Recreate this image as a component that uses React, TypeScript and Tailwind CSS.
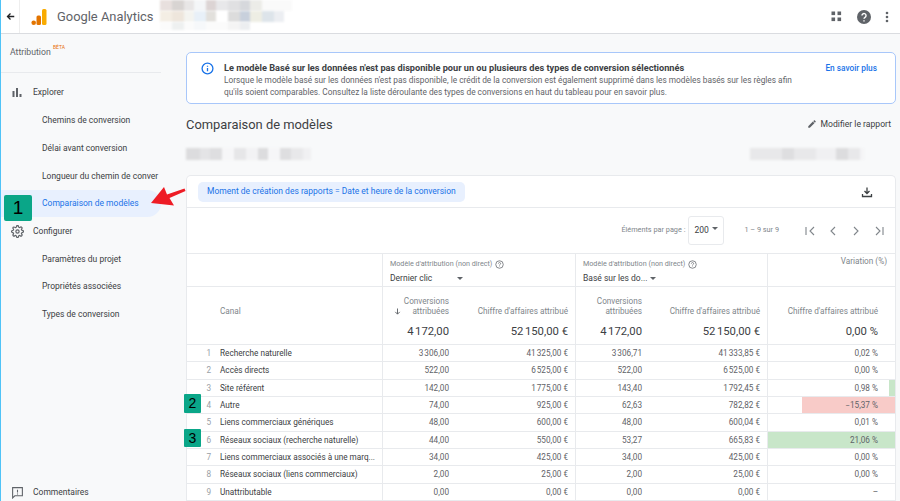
import React from "react";

const F = "font-['Roboto',sans-serif]";

const rows = [
  ["1", "Recherche naturelle", "3\u202f306,00", "41\u202f325,00 €", "3\u202f306,71", "41\u202f333,85 €", "0,02 %"],
  ["2", "Accès directs", "522,00", "6\u202f525,00 €", "522,00", "6\u202f525,00 €", "0,00 %"],
  ["3", "Site référent", "142,00", "1\u202f775,00 €", "143,40", "1\u202f792,45 €", "0,98 %"],
  ["4", "Autre", "74,00", "925,00 €", "62,63", "782,82 €", "−15,37 %"],
  ["5", "Liens commerciaux génériques", "48,00", "600,00 €", "48,00", "600,04 €", "0,01 %"],
  ["6", "Réseaux sociaux (recherche naturelle)", "44,00", "550,00 €", "53,27", "665,83 €", "21,06 %"],
  ["7", "Liens commerciaux associés à une marq...", "34,00", "425,00 €", "34,00", "425,00 €", "0,00 %"],
  ["8", "Réseaux sociaux (liens commerciaux)", "2,00", "25,00 €", "2,00", "25,00 €", "0,00 %"],
  ["9", "Unattributable", "0,00", "0,00 €", "0,00", "0,00 €", "–"],
];

function Blur({ cells, h }: { cells: [number, string][]; h: number }) {
  return (
    <div className="flex blur-[1px]" style={{ height: h }}>
      {cells.map(([w, c], i) => (
        <div key={i} style={{ width: w, backgroundColor: c }} />
      ))}
    </div>
  );
}

function NavItem({ label, active }: { label: string; active?: boolean }) {
  return (
    <div
      className={`h-[27.7px] flex items-center pl-[41px] text-[8.5px] whitespace-nowrap overflow-hidden w-[160px] rounded-r-full ${
        active ? "bg-[#e8f0fe] text-[#1a73e8]" : "text-[#3c4043]"
      }`}
    >
      {label}
    </div>
  );
}

function ModelHead({ value }: { value: string }) {
  return (
    <div className="pl-[7px] pt-[3px] border-b border-[#e8eaed] h-[33px]">
      <div className="flex items-center gap-[3px] text-[7.2px] text-[#80868b] h-[14px] whitespace-nowrap">
        Modèle d'attribution (non direct)
        <svg width="9" height="9" viewBox="0 0 24 24" fill="none" stroke="#5f6368" strokeWidth="2">
          <circle cx="12" cy="12" r="10" />
          <path d="M9 9.5a3 3 0 1 1 4.5 2.6c-1 .6-1.5 1.2-1.5 2.4M12 17v1" />
        </svg>
      </div>
      <div className="flex items-center text-[8.5px] text-[#3c4043] mt-[1px] whitespace-nowrap">
        <span className="w-[67px]">{value}</span>
        <span className="w-0 h-0 border-x-[3px] border-x-transparent border-t-[3px] border-t-[#5f6368]" />
      </div>
    </div>
  );
}

function MetricHead({ sorted }: { sorted?: boolean }) {
  return (
    <div className="grid grid-cols-[66px_1fr] h-[57px] pr-[7px]">
      <div className="flex flex-col items-end pt-[9px] relative">
        <div className="text-[8.2px] leading-[10px] text-[#80868b] text-right whitespace-nowrap">
          Conversions
          <br />
          attribuées
        </div>
        {sorted && (
          <svg className="absolute left-[10px] top-[20px]" width="9" height="9" viewBox="0 0 24 24" fill="none" stroke="#5f6368" strokeWidth="2.5">
            <path d="M12 4v15M6 13l6 6 6-6" />
          </svg>
        )}
        <div className="text-[11.3px] text-[#3c4043] mt-[8px] leading-[15px] whitespace-nowrap">4{"\u202f"}172,00</div>
      </div>
      <div className="flex flex-col items-end pt-[19px]">
        <div className="text-[8.2px] leading-[10px] text-[#80868b] whitespace-nowrap">Chiffre d'affaires attribué</div>
        <div className="text-[11.3px] text-[#3c4043] mt-[8px] leading-[15px] whitespace-nowrap">52{"\u202f"}150,00 €</div>
      </div>
    </div>
  );
}

export default function App() {
  return (
    <div className={`${F} w-[900px] h-[501px] overflow-hidden bg-[#f8f9fa] relative border-l border-[#4fc3f7] flex flex-col`}>
      {/* top bar */}
      <header className="h-[34px] shrink-0 bg-white border-b border-[#dadce0] flex items-center">
        <div className="w-[19px] h-full flex items-center justify-center border-r border-[#eeeeee]">
          <svg width="9" height="9" viewBox="0 0 24 24" fill="none" stroke="#202124" strokeWidth="3.5">
            <path d="M22 12H4M12 4l-8 8 8 8" />
          </svg>
        </div>
        <svg className="ml-[11px]" width="16" height="18" viewBox="0 0 16 18">
          <rect x="11" y="1" width="4.5" height="16" rx="1.5" fill="#f9ab00" />
          <rect x="5.5" y="7.5" width="4.5" height="9.5" rx="1.5" fill="#e37400" />
          <circle cx="2.7" cy="14.7" r="2.3" fill="#e37400" />
        </svg>
        <span className="ml-[10px] text-[12.9px] text-[#5f6368] whitespace-nowrap w-[103px]">Google Analytics</span>
        <div className="flex flex-col self-start">
          <Blur h={11} cells={[[12, "#e8e0de"], [12, "#d8d4d2"], [10, "#e8e6e6"], [12, "#f4f6f8"], [10, "#dcd4d4"], [12, "#e8e8ea"], [12, "#e0e0e2"], [10, "#d6d8dc"], [12, "#ecece8"], [30, "#fafafa"]]} />
          <Blur h={11} cells={[[12, "#f4eee4"], [12, "#eee6dc"], [10, "#f4f4f0"], [12, "#e8f0f8"], [10, "#e2e0dc"], [12, "#ffffff"], [12, "#dcdcdc"], [10, "#c8d0dc"], [12, "#eeeee4"], [12, "#dde4ea"], [10, "#eceef2"]]} />
          <Blur h={8} cells={[[12, "#fbfbfb"], [12, "#eef0f0"], [10, "#fbfbfb"], [12, "#f6f8fa"], [10, "#fbfbfb"], [12, "#fbfbfb"], [12, "#f4f4f4"], [10, "#eceef0"]]} />
        </div>
        <div className="ml-auto flex items-center pr-[11px]">
          <svg width="11" height="11" viewBox="0 0 11 11" fill="#5f6368">
            <rect x="0.5" y="0.5" width="3.6" height="3.6" />
            <rect x="6.5" y="0.5" width="3.6" height="3.6" />
            <rect x="0.5" y="6.5" width="3.6" height="3.6" />
            <rect x="6.5" y="6.5" width="3.6" height="3.6" />
          </svg>
          <svg className="ml-[15px]" width="14" height="14" viewBox="0 0 24 24">
            <circle cx="12" cy="12" r="12" fill="#5f6368" />
            <path d="M8.5 9.5a3.5 3.5 0 1 1 5.3 3c-1.1.7-1.8 1.2-1.8 2.7M12 17.5v2" fill="none" stroke="#fff" strokeWidth="2.4" />
          </svg>
          <svg className="ml-[14px]" width="4" height="12" viewBox="0 0 4 12" fill="#5f6368">
            <circle cx="2" cy="2" r="1.3" />
            <circle cx="2" cy="6" r="1.3" />
            <circle cx="2" cy="10" r="1.3" />
          </svg>
        </div>
      </header>

      <div className="flex flex-1 min-h-0">
        {/* sidebar */}
        <aside className="w-[185px] shrink-0 flex flex-col text-[#3c4043]">
          <div className="h-[39px] w-[160px] border-b border-[#e8eaed] pl-[9px] pt-[11px] text-[8.7px] leading-[14px] text-[#5f6368]">
            Attribution <sup className="text-[5px] text-[#e8710a] align-[4px]">BÊTA</sup>
          </div>
          <div className="h-[6px]" />
          <div className="h-[27.7px] flex items-center pl-[11px] text-[8.5px]">
            <svg width="10" height="9" viewBox="0 0 10 9" fill="#5f6368">
              <rect x="0.5" y="3" width="2" height="6" />
              <rect x="4" y="0" width="2" height="9" />
              <rect x="7.5" y="6" width="2" height="3" />
            </svg>
            <span className="ml-[11px]">Explorer</span>
          </div>
          <NavItem label="Chemins de conversion" />
          <NavItem label="Délai avant conversion" />
          <NavItem label="Longueur du chemin de conver" />
          <NavItem label="Comparaison de modèles" active />
          <div className="h-[27.7px] flex items-center pl-[10px] text-[8.5px]">
            <svg width="13" height="13" viewBox="0 0 24 24" fill="none" stroke="#5f6368" strokeWidth="2.2">
              <circle cx="12" cy="12" r="3" />
              <path d="M19.4 15a1.7 1.7 0 0 0 .3 1.8l.1.1a2 2 0 1 1-2.9 2.9l-.1-.1a1.7 1.7 0 0 0-2.8 1.2V21a2 2 0 1 1-4 0v-.1a1.7 1.7 0 0 0-2.9-1.1l-.1.1a2 2 0 1 1-2.8-2.9l.1-.1a1.7 1.7 0 0 0-1.2-2.8H3a2 2 0 1 1 0-4h.1a1.7 1.7 0 0 0 1.1-2.9l-.1-.1a2 2 0 1 1 2.9-2.8l.1.1a1.7 1.7 0 0 0 1.8.3H9a1.7 1.7 0 0 0 1-1.5V3a2 2 0 1 1 4 0v.1a1.7 1.7 0 0 0 2.9 1.2l.1-.1a2 2 0 1 1 2.8 2.9l-.1.1a1.7 1.7 0 0 0-.3 1.8V9a1.7 1.7 0 0 0 1.5 1H21a2 2 0 1 1 0 4h-.1a1.7 1.7 0 0 0-1.5 1z" />
            </svg>
            <span className="ml-[9px]">Configurer</span>
          </div>
          <NavItem label="Paramètres du projet" />
          <NavItem label="Propriétés associées" />
          <NavItem label="Types de conversion" />
          <div className="mt-auto h-[16px] mb-[1px] flex items-center pl-[10px] text-[8.5px]">
            <svg width="13" height="13" viewBox="0 0 24 24" fill="none" stroke="#5f6368" strokeWidth="2">
              <path d="M3 3h18v15H7l-4 4z" />
              <path d="M12 7v5M12 14v1.5" />
            </svg>
            <span className="ml-[9px]">Commentaires</span>
          </div>
        </aside>

        {/* main */}
        <main className="flex-1 min-w-0 pr-[4px] pt-[18px] flex flex-col">
          <section className="h-[52px] shrink-0 bg-white border border-[#a8c7fa] rounded-[5px] flex pl-[14px] pr-[18px] pt-[9px]">
            <svg className="shrink-0" width="13" height="13" viewBox="0 0 24 24" fill="none" stroke="#1a73e8" strokeWidth="2.4">
              <circle cx="12" cy="12" r="10" />
              <path d="M12 11v6M12 7v1.8" />
            </svg>
            <div className="ml-[10px] flex-1 min-w-0">
              <div className="text-[9.2px] leading-[12px] font-bold text-[#3c4043] whitespace-nowrap">
                Le modèle Basé sur les données n'est pas disponible pour un ou plusieurs des types de conversion sélectionnés
              </div>
              <div className="text-[8.32px] leading-[11.5px] text-[#5f6368] mt-[1px] whitespace-nowrap">
                Lorsque le modèle basé sur les données n'est pas disponible, le crédit de la conversion est également supprimé dans les modèles basés sur les règles afin
                <br />
                qu'ils soient comparables. Consultez la liste déroulante des types de conversions en haut du tableau pour en savoir plus.
              </div>
            </div>
            <div className="text-[8.3px] leading-[12px] text-[#1a73e8] font-medium whitespace-nowrap">En savoir plus</div>
          </section>

          <div className="h-[40px] shrink-0 flex items-center justify-between pr-[5px] pt-[1px]">
            <h1 className="text-[12.9px] text-[#3c4043]">Comparaison de modèles</h1>
            <div className="flex items-center gap-[4px] text-[8.6px] text-[#3c4043]">
              <svg width="10" height="10" viewBox="0 0 24 24" fill="#5f6368">
                <path d="M3 17.25V21h3.75L17.8 9.94l-3.75-3.75L3 17.25zM20.7 7.04a1 1 0 0 0 0-1.41l-2.34-2.34a1 1 0 0 0-1.41 0l-1.83 1.83 3.75 3.75 1.83-1.83z" />
              </svg>
              Modifier le rapport
            </div>
          </div>

          <div className="h-[12px] shrink-0 flex items-center justify-between mt-[4px]">
            <Blur h={12} cells={[[14, "#dcdcde"], [10, "#e4e4e6"], [12, "#dedee0"], [12, "#f6f6f8"], [12, "#e6e6e8"], [12, "#f2f2f4"], [10, "#dcdcde"], [12, "#f6f6f8"], [11, "#dedee0"], [12, "#e8e8ea"], [8, "#f0f0f2"]]} />
            <div className="pr-[32px]">
              <Blur h={12} cells={[[32, "#e8e8ea"], [12, "#dedee0"], [22, "#e8e8ea"], [20, "#f0f0f2"], [12, "#dcdcde"], [12, "#e8e8ea"], [4, "#f4f4f6"]]} />
            </div>
          </div>

          {/* table card */}
          <section className="mt-[15px] flex-1 min-h-0 bg-white rounded-t-[5px] border-x border-t border-[#e8eaed] flex flex-col">
            <div className="h-[32px] shrink-0 border-b border-[#e8eaed] flex items-center pl-[11px] pr-[22px] justify-between">
              <div className="h-[20px] flex items-center rounded-[5px] bg-[#e8f0fe] px-[9px] text-[8.5px] text-[#1a73e8] whitespace-nowrap">
                Moment de création des rapports = Date et heure de la conversion
              </div>
              <svg width="12" height="12" viewBox="0 0 24 24" fill="none" stroke="#3c4043" strokeWidth="2.6">
                <path d="M12 3v12M7 10l5 5 5-5M3 16v5h18v-5" />
              </svg>
            </div>

            <div className="h-[46px] shrink-0 border-b border-[#e8eaed] flex items-center pr-[11px] text-[7.3px] text-[#80868b]">
              <span className="ml-auto">Éléments par page :</span>
              <div className="ml-[3px] w-[36px] h-[29px] border border-[#e8eaed] rounded-[3px] flex items-center pl-[5px] text-[8.5px] text-[#3c4043]">
                200
                <span className="ml-[3px] mt-[-4px] w-0 h-0 border-x-[3px] border-x-transparent border-t-[3px] border-t-[#5f6368]" />
              </div>
              <span className="ml-[20px] mr-[26px]">1 – 9 sur 9</span>
              <svg width="79" height="12" viewBox="0 0 79 12" fill="none" stroke="#80868b" strokeWidth="1.1">
                <path d="M1 2v8M9 2L5 6l4 4" />
                <path d="M30 2l-4 4 4 4" />
                <path d="M49 2l4 4-4 4" />
                <path d="M71 2l4 4-4 4M78 2v8" />
              </svg>
            </div>

            {/* header */}
            <div className="grid grid-cols-[195px_193px_192px_1fr] shrink-0 border-b border-[#e8eaed]">
              <div className="flex flex-col">
                <div className="h-[33px] border-b border-[#e8eaed]" />
                <div className="h-[57px] pt-[18px] pl-[33px] text-[8.2px] leading-[12px] text-[#80868b]">Canal</div>
              </div>
              <div className="border-l border-[#e8eaed]">
                <ModelHead value="Dernier clic" />
                <MetricHead sorted />
              </div>
              <div className="border-l border-[#e8eaed]">
                <ModelHead value="Basé sur les do..." />
                <MetricHead />
              </div>
              <div className="border-l border-[#e8eaed]">
                <div className="h-[33px] border-b border-[#e8eaed] text-right pr-[8px] pt-[1px] text-[8.2px] text-[#80868b]">Variation (%)</div>
                <div className="h-[57px] flex flex-col items-end pr-[17px] pt-[19px]">
                  <div className="text-[8.2px] leading-[10px] text-[#80868b] whitespace-nowrap">Chiffre d'affaires attribué</div>
                  <div className="text-[11.3px] text-[#3c4043] mt-[8px] leading-[15px]">0,00 %</div>
                </div>
              </div>
            </div>

            {/* rows */}
            {rows.map((r) => (
              <div
                key={r[0]}
                className="grid grid-cols-[195px_193px_192px_1fr] h-[17.35px] shrink-0 border-b border-[#e8eaed] text-[8.2px] text-[#5f6368] leading-[16px]"
              >
                <div className="flex">
                  <span className="w-[24px] shrink-0 text-right text-[#9aa0a6]">{r[0]}</span>
                  <span className="ml-[9px] whitespace-nowrap text-[#3c4043]">{r[1]}</span>
                </div>
                <div className="border-l border-[#e8eaed] grid grid-cols-[66px_1fr] pr-[7px] text-right">
                  <span>{r[2]}</span>
                  <span>{r[3]}</span>
                </div>
                <div className="border-l border-[#e8eaed] grid grid-cols-[66px_1fr] pr-[7px] text-right">
                  <span>{r[4]}</span>
                  <span>{r[5]}</span>
                </div>
                <div className="border-l border-[#e8eaed] pr-[17px] text-right relative">
                  {r[0] === "3" && <div className="absolute right-0 top-0 bottom-0 w-[6px] bg-[#c8e6c9]" />}
                  {r[0] === "4" && <div className="absolute right-0 top-0 bottom-0 w-[93px] bg-[#f8cbc8]" />}
                  {r[0] === "6" && <div className="absolute right-0 left-0 top-0 bottom-0 bg-[#c8e6c9]" />}
                  <span className="relative">{r[6]}</span>
                </div>
              </div>
            ))}
          </section>
        </main>
      </div>

      {/* annotations */}
      <div className="absolute left-[3px] top-[195px] w-[28px] h-[26px] bg-[#0aa688] rounded-[2px] flex items-center justify-center text-[19px] text-black font-['Liberation_Sans',sans-serif]">1</div>
      <div className="absolute left-[183px] top-[394px] w-[17px] h-[19px] bg-[#0aa688] rounded-[1px] flex items-center justify-center text-[14px] text-black font-['Liberation_Sans',sans-serif]">2</div>
      <div className="absolute left-[183px] top-[429px] w-[17px] h-[18px] bg-[#0aa688] rounded-[1px] flex items-center justify-center text-[14px] text-black font-['Liberation_Sans',sans-serif]">3</div>
      <svg className="absolute left-[148px] top-[184px]" width="38" height="24" viewBox="0 0 38 24" fill="#ee1c25">
        <path d="M2 19 L15 3 L18 10.5 L35.5 4.5 L36.5 7 L20.5 14 L25 21.5 Z" />
      </svg>
    </div>
  );
}
